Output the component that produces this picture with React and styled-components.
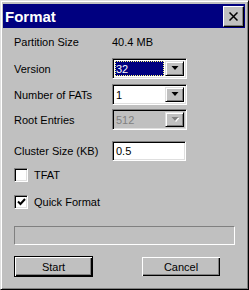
import styled, { createGlobalStyle } from 'styled-components'

const GlobalStyle = createGlobalStyle`
    html, body {
        margin: 0;
        padding: 0;
        background: #c0c0c0;
    }
    body {
        font-family: "Liberation Sans", Arial, sans-serif;
        font-size: 11px;
        color: #000;
    }
`

const Window = styled.div`
    box-sizing: border-box;
    width: 249px;
    height: 290px;
    background: #c0c0c0;
    border-top: 1px solid #dfdfdf;
    border-left: 1px solid #dfdfdf;
    border-right: 1px solid #000;
    border-bottom: 1px solid #000;
    box-shadow: inset 1px 1px 0 #fff, inset -1px -1px 0 #808080;
    padding: 2px 3px 3px 2px;
    display: flex;
    flex-direction: column;
`

const TitleBar = styled.div`
    height: 24px;
    margin-top: 1px;
    background: #000080;
    display: flex;
    align-items: center;
    justify-content: space-between;
    padding: 0 1px 0 2px;
`

const Title = styled.span`
    color: #fff;
    font-weight: bold;
    font-size: 15px;
    line-height: 1;
`

const CloseButton = styled.div`
    box-sizing: border-box;
    width: 21px;
    height: 21px;
    background: #c0c0c0;
    border-top: 1px solid #fff;
    border-left: 1px solid #fff;
    border-right: 1px solid #000;
    border-bottom: 1px solid #000;
    box-shadow: inset -1px -1px 0 #808080;
    display: flex;
    align-items: center;
    justify-content: center;
`

const Body = styled.div`
    display: flex;
    flex-direction: column;
    padding: 0 10px 0 11px;
`

const Row = styled.div`
    display: flex;
    align-items: center;
    height: ${p => p.$h}px;
    margin-top: ${p => p.$mt}px;
`

const Label = styled.span`
    width: 98px;
    flex: none;
    white-space: nowrap;
`

const Sunken = styled.div`
    box-sizing: border-box;
    width: ${p => p.$w}px;
    height: ${p => p.$h}px;
    background: ${p => (p.$disabled ? '#c0c0c0' : '#fff')};
    color: ${p => (p.$disabled ? '#808080' : '#000')};
    border-top: 1px solid #808080;
    border-left: 1px solid #808080;
    border-right: 1px solid #fff;
    border-bottom: 1px solid #fff;
    box-shadow: inset 1px 1px 0 #000, inset -1px -1px 0 #dfdfdf;
    padding: 2px;
    display: flex;
    align-items: stretch;
`

const FieldText = styled.div`
    flex: 1;
    display: flex;
    align-items: center;
    padding-left: 1px;
    background: ${p => (p.$selected ? '#000080' : 'transparent')};
    color: ${p => (p.$selected ? '#fff' : 'inherit')};
    outline: ${p => (p.$selected ? '1px dotted #ffff80' : 'none')};
    outline-offset: -1px;
    margin-right: ${p => (p.$selected ? '1px' : '0')};
`

const DropButton = styled.div`
    box-sizing: border-box;
    width: 19px;
    flex: none;
    background: #c0c0c0;
    border-top: 1px solid #dfdfdf;
    border-left: 1px solid #dfdfdf;
    border-right: 1px solid #000;
    border-bottom: 1px solid #000;
    box-shadow: inset 1px 1px 0 #fff, inset -1px -1px 0 #808080;
    display: flex;
    align-items: center;
    justify-content: center;
`

const Check = styled.div`
    box-sizing: border-box;
    width: 14px;
    height: 14px;
    flex: none;
    background: #fff;
    border-top: 1px solid #808080;
    border-left: 1px solid #808080;
    border-right: 1px solid #fff;
    border-bottom: 1px solid #fff;
    box-shadow: inset 1px 1px 0 #000, inset -1px -1px 0 #dfdfdf;
    display: flex;
    align-items: center;
    justify-content: center;
`

const CheckLabel = styled.span`
    margin-left: 6px;
`

const Progress = styled.div`
    box-sizing: border-box;
    height: 19px;
    margin-top: ${p => p.$mt}px;
    border-top: 1px solid #808080;
    border-left: 1px solid #808080;
    border-right: 1px solid #fff;
    border-bottom: 1px solid #fff;
`

const ButtonRow = styled.div`
    display: flex;
    margin-top: 11px;
    gap: 48px;
`

const Button = styled.div`
    box-sizing: border-box;
    width: ${p => (p.$default ? 79 : 80)}px;
    height: 21px;
    background: #c0c0c0;
    display: flex;
    align-items: center;
    justify-content: center;
    border: 1px solid ${p => (p.$default ? '#000' : '#c0c0c0')};
    box-shadow: inset 1px 1px 0 #fff, inset -1px -1px 0 #000, inset -2px -2px 0 #808080;
`

const Arrow = ({ disabled }) => (
    <svg width="8" height="5" viewBox="0 0 8 5">
        {disabled && <path d="M1.5 1h7L5 5z" fill="#fff" />}
        <path d="M0.5 0h7L4 4z" fill={disabled ? '#808080' : '#000'} />
    </svg>
)

const Combo = ({ value, selected, disabled }) => (
    <Sunken $w={75} $h={21} $disabled={disabled}>
        <FieldText $selected={selected}>{value}</FieldText>
        <DropButton>
            <Arrow disabled={disabled} />
        </DropButton>
    </Sunken>
)

export default function App() {
    return (
        <>
            <GlobalStyle />
            <Window>
                <TitleBar>
                    <Title>Format</Title>
                    <CloseButton>
                        <svg width="9" height="9" viewBox="0 0 9 9">
                            <path d="M0.5 0.5l8 8M8.5 0.5l-8 8" stroke="#000" strokeWidth="1.5" />
                        </svg>
                    </CloseButton>
                </TitleBar>
                <Body>
                    <Row $h={14} $mt={7}>
                        <Label>Partition Size</Label>
                        <span>40.4 MB</span>
                    </Row>
                    <Row $h={21} $mt={9}>
                        <Label>Version</Label>
                        <Combo value="32" selected />
                    </Row>
                    <Row $h={21} $mt={5}>
                        <Label>Number of FATs</Label>
                        <Combo value="1" />
                    </Row>
                    <Row $h={21} $mt={4}>
                        <Label>Root Entries</Label>
                        <Combo value="512" disabled />
                    </Row>
                    <Row $h={20} $mt={11}>
                        <Label>Cluster Size (KB)</Label>
                        <Sunken $w={74} $h={20}>
                            <FieldText>0.5</FieldText>
                        </Sunken>
                    </Row>
                    <Row $h={14} $mt={7}>
                        <Check />
                        <CheckLabel>TFAT</CheckLabel>
                    </Row>
                    <Row $h={14} $mt={13}>
                        <Check>
                            <svg width="9" height="8" viewBox="0 0 9 8">
                                <path d="M1 3.5l2.5 2.5L8 1" stroke="#000" strokeWidth="2" fill="none" />
                            </svg>
                        </Check>
                        <CheckLabel>Quick Format</CheckLabel>
                    </Row>
                    <Progress $mt={17} />
                    <ButtonRow>
                        <Button $default>Start</Button>
                        <Button>Cancel</Button>
                    </ButtonRow>
                </Body>
            </Window>
        </>
    )
}
